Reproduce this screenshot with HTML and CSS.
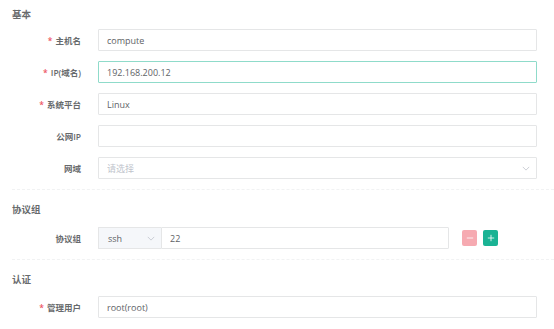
FILE: index.html
```html
<!DOCTYPE html>
<html lang="zh">

<head>
    <meta charset="UTF-8">
    <meta name="viewport" content="width=device-width, initial-scale=1.0">
    <title>资产</title>
    <link rel="stylesheet" href="styles.css">
</head>

<body>
    <form class="asset-form">
        <!-- 基本 -->
        <div class="form-section">
            <h3 class="section-title">基本</h3>
            <div class="form-row">
                <label class="form-label required">主机名</label>
                <div class="form-field"><input class="form-input" type="text" value="compute"></div>
            </div>
            <div class="form-row">
                <label class="form-label required">IP(域名)</label>
                <div class="form-field"><input class="form-input is-focus" type="text" value="192.168.200.12"></div>
            </div>
            <div class="form-row">
                <label class="form-label required">系统平台</label>
                <div class="form-field"><input class="form-input" type="text" value="Linux"></div>
            </div>
            <div class="form-row">
                <label class="form-label">公网IP</label>
                <div class="form-field"><input class="form-input" type="text" value=""></div>
            </div>
            <div class="form-row">
                <label class="form-label">网域</label>
                <div class="form-field select-field">
                    <input class="form-input" type="text" placeholder="请选择" readonly>
                    <svg class="chevron" viewBox="0 0 10 6" width="8" height="5">
                        <path d="M1 1l4 4 4-4" fill="none" stroke="#c0c4cc" stroke-width="1"/>
                    </svg>
                </div>
            </div>
        </div>

        <hr class="divider">

        <!-- 协议组 -->
        <div class="form-section">
            <h3 class="section-title title-protocol">协议组</h3>
            <div class="form-row">
                <label class="form-label">协议组</label>
                <div class="form-field protocol-field">
                    <div class="proto-select">
                        <span>ssh</span>
                        <svg class="chevron" viewBox="0 0 10 6" width="8" height="5">
                            <path d="M1 1l4 4 4-4" fill="none" stroke="#c0c4cc" stroke-width="1"/>
                        </svg>
                    </div>
                    <input class="form-input port-input" type="text" value="22">
                    <div class="proto-actions">
                        <button type="button" class="btn-icon btn-minus">
                            <svg viewBox="0 0 10 10" width="8" height="8"><path d="M1 5h8" stroke="#fff" stroke-width="1"/></svg>
                        </button>
                        <button type="button" class="btn-icon btn-plus">
                            <svg viewBox="0 0 10 10" width="8" height="8"><path d="M1 5h8M5 1v8" stroke="#fff" stroke-width="1"/></svg>
                        </button>
                    </div>
                </div>
            </div>
        </div>

        <hr class="divider">

        <!-- 认证 -->
        <div class="form-section">
            <h3 class="section-title title-auth">认证</h3>
            <div class="form-row">
                <label class="form-label required">管理用户</label>
                <div class="form-field"><input class="form-input" type="text" value="root(root)"></div>
            </div>
        </div>
    </form>
</body>

</html>
```

FILE: styles.css
```css
/* asset create form */

body {
    margin: 0;
    background: #fff;
    font-family: "Open Sans", "Noto Sans CJK SC", sans-serif;
    color: #676a6c;
}

.asset-form {
    margin: 0;
    padding: 0 17px 0 0;
}

.form-section {
    padding-top: 8px;
}

.section-title {
    margin: 0 0 7px 12px;
    font-size: 9.5px;
    line-height: 14px;
    font-weight: 600;
    color: #676a6c;
}

.title-protocol {
    margin-top: 5px;
    margin-bottom: 10px;
}

.title-auth {
    margin-top: 5px;
    margin-bottom: 9px;
}

/* rows */

.form-row {
    display: flex;
    align-items: center;
    height: 22px;
    margin-bottom: 10px;
}

.form-label {
    flex: 0 0 81px;
    text-align: right;
    font-size: 8.5px;
    font-weight: 600;
    color: #676a6c;
    margin-right: 17px;
}

.form-label.required::before {
    content: "*";
    color: #ed5565;
    margin-right: 3px;
}

.form-field {
    flex: 1;
    position: relative;
    display: flex;
    height: 100%;
}

.form-input {
    box-sizing: border-box;
    width: 100%;
    height: 100%;
    margin: 0;
    padding: 0 8px;
    border: 1px solid #e5e6e7;
    border-radius: 1px;
    font-family: inherit;
    font-size: 9px;
    color: #606266;
    outline: none;
    background: #fff;
}

.form-input.is-focus {
    border-color: #8fdbca;
}

.form-input::placeholder {
    color: #c0c4cc;
}

.select-field .chevron {
    position: absolute;
    right: 7px;
    top: 9px;
}

/* protocol group */

.protocol-field {
    align-items: center;
}

.proto-select {
    box-sizing: border-box;
    display: flex;
    align-items: center;
    justify-content: space-between;
    flex: 0 0 63px;
    height: 100%;
    padding: 0 6px 0 9px;
    border: 1px solid #e5e6e7;
    border-right: none;
    border-radius: 1px 0 0 1px;
    background: #f5f7fa;
    font-size: 9px;
    color: #606266;
}

.port-input {
    flex: 0 0 288px;
    width: 288px;
    border-radius: 0 1px 1px 0;
}

.proto-actions {
    display: flex;
    gap: 6px;
    margin-left: 13px;
}

.btn-icon {
    display: flex;
    align-items: center;
    justify-content: center;
    width: 15px;
    height: 16px;
    padding: 0;
    border: none;
    border-radius: 2px;
    cursor: pointer;
}

.btn-minus {
    background: #f6aab1;
}

.btn-plus {
    background: #1ab394;
}

.divider {
    margin: 4px 0 0 12px;
    border: none;
    border-top: 1px dashed #f1f2f3;
    height: 0;
    width: calc(100% + 5px);
}
```
